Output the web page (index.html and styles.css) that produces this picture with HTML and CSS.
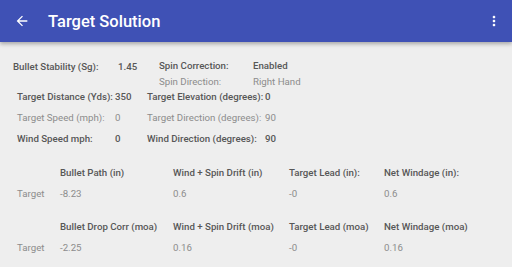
FILE: index.html
```html
<!DOCTYPE html>
<html lang="en">
<head>
    <meta charset="UTF-8">
    <meta name="viewport" content="width=device-width, initial-scale=1.0">
    <title>Target Solution</title>
    <link rel="stylesheet" href="styles.css">
</head>
<body>
    <header class="app-bar">
        <svg class="back" viewBox="0 0 24 24" width="16" height="16">
            <path d="M20 11H7.83l5.59-5.59L12 4l-8 8 8 8 1.41-1.41L7.83 13H20v-2z" fill="#fff"/>
        </svg>
        <h1>Target Solution</h1>
        <svg class="menu" viewBox="0 0 24 24" width="16" height="16">
            <path d="M12 8c1.1 0 2-.9 2-2s-.9-2-2-2-2 .9-2 2 .9 2 2 2zm0 2c-1.1 0-2 .9-2 2s.9 2 2 2 2-.9 2-2-.9-2-2-2zm0 6c-1.1 0-2 .9-2 2s.9 2 2 2 2-.9 2-2-.9-2-2-2z" fill="#fff"/>
        </svg>
    </header>

    <main class="content">
        <div class="summary">
            <div class="stability">
                <span class="strong">Bullet Stability (Sg):</span>
                <span class="strong">1.45</span>
            </div>
            <div class="spin">
                <span class="strong">Spin Correction:</span>
                <span class="strong">Enabled</span>
                <span class="light">Spin Direction:</span>
                <span class="light">Right Hand</span>
            </div>
        </div>

        <div class="conditions">
            <span class="strong">Target Distance (Yds):</span>
            <span class="strong">350</span>
            <span class="strong">Target Elevation (degrees):</span>
            <span class="strong">0</span>

            <span class="light">Target Speed (mph):</span>
            <span class="light">0</span>
            <span class="light">Target Direction (degrees):</span>
            <span class="light">90</span>

            <span class="strong">Wind Speed mph:</span>
            <span class="strong">0</span>
            <span class="strong">Wind Direction (degrees):</span>
            <span class="strong">90</span>
        </div>

        <div class="solution">
            <span></span>
            <span class="strong">Bullet Path (in)</span>
            <span class="strong">Wind + Spin Drift (in)</span>
            <span class="strong">Target Lead (in):</span>
            <span class="strong">Net Windage (in):</span>

            <span class="light">Target</span>
            <span class="light">-8.23</span>
            <span class="light">0.6</span>
            <span class="light">-0</span>
            <span class="light">0.6</span>
        </div>

        <div class="solution">
            <span></span>
            <span class="strong">Bullet Drop Corr (moa)</span>
            <span class="strong">Wind + Spin Drift (moa)</span>
            <span class="strong">Target Lead (moa)</span>
            <span class="strong">Net Windage (moa)</span>

            <span class="light">Target</span>
            <span class="light">-2.25</span>
            <span class="light">0.16</span>
            <span class="light">-0</span>
            <span class="light">0.16</span>
        </div>
    </main>
</body>
</html>
```

FILE: styles.css
```css
* {
    margin: 0;
    padding: 0;
    box-sizing: border-box;
}

body {
    font-family: Roboto, "Noto Sans", Arial, sans-serif;
    font-size: 9.7px;
    background: #eeeeee;
    color: #5c5c5c;
    width: 512px;
    height: 267px;
    overflow: hidden;
}

.app-bar {
    height: 42px;
    background: #3f51b5;
    display: flex;
    align-items: center;
    padding: 0 10px 0 14px;
    box-shadow: 0 2px 4px rgba(0, 0, 0, 0.3);
    position: relative;
}

.app-bar h1 {
    color: #fff;
    font-size: 16.5px;
    font-weight: 500;
    margin-left: 18px;
    flex: 1;
}

.strong {
    font-weight: 500;
    color: #575757;
}

.light {
    color: #8c8c8c;
}

.content {
    padding: 18px 0 0 17px;
    white-space: nowrap;
}

.summary {
    display: flex;
    margin-left: -4px;
    height: 31px;
}

.stability {
    display: grid;
    grid-template-columns: 105px auto;
    width: 146px;
    padding-top: 1px;
}

.spin {
    display: grid;
    grid-template-columns: 94px auto;
    row-gap: 1px;
}

.conditions {
    display: grid;
    grid-template-columns: 98px 32px 118px auto;
    row-gap: 9px;
    line-height: 12px;
}

.solution {
    display: grid;
    grid-template-columns: 43px 113px 116px 95px auto;
    row-gap: 9px;
    margin-top: 21px;
    line-height: 12px;
}

.conditions + .solution {
    margin-top: 22px;
}
```
